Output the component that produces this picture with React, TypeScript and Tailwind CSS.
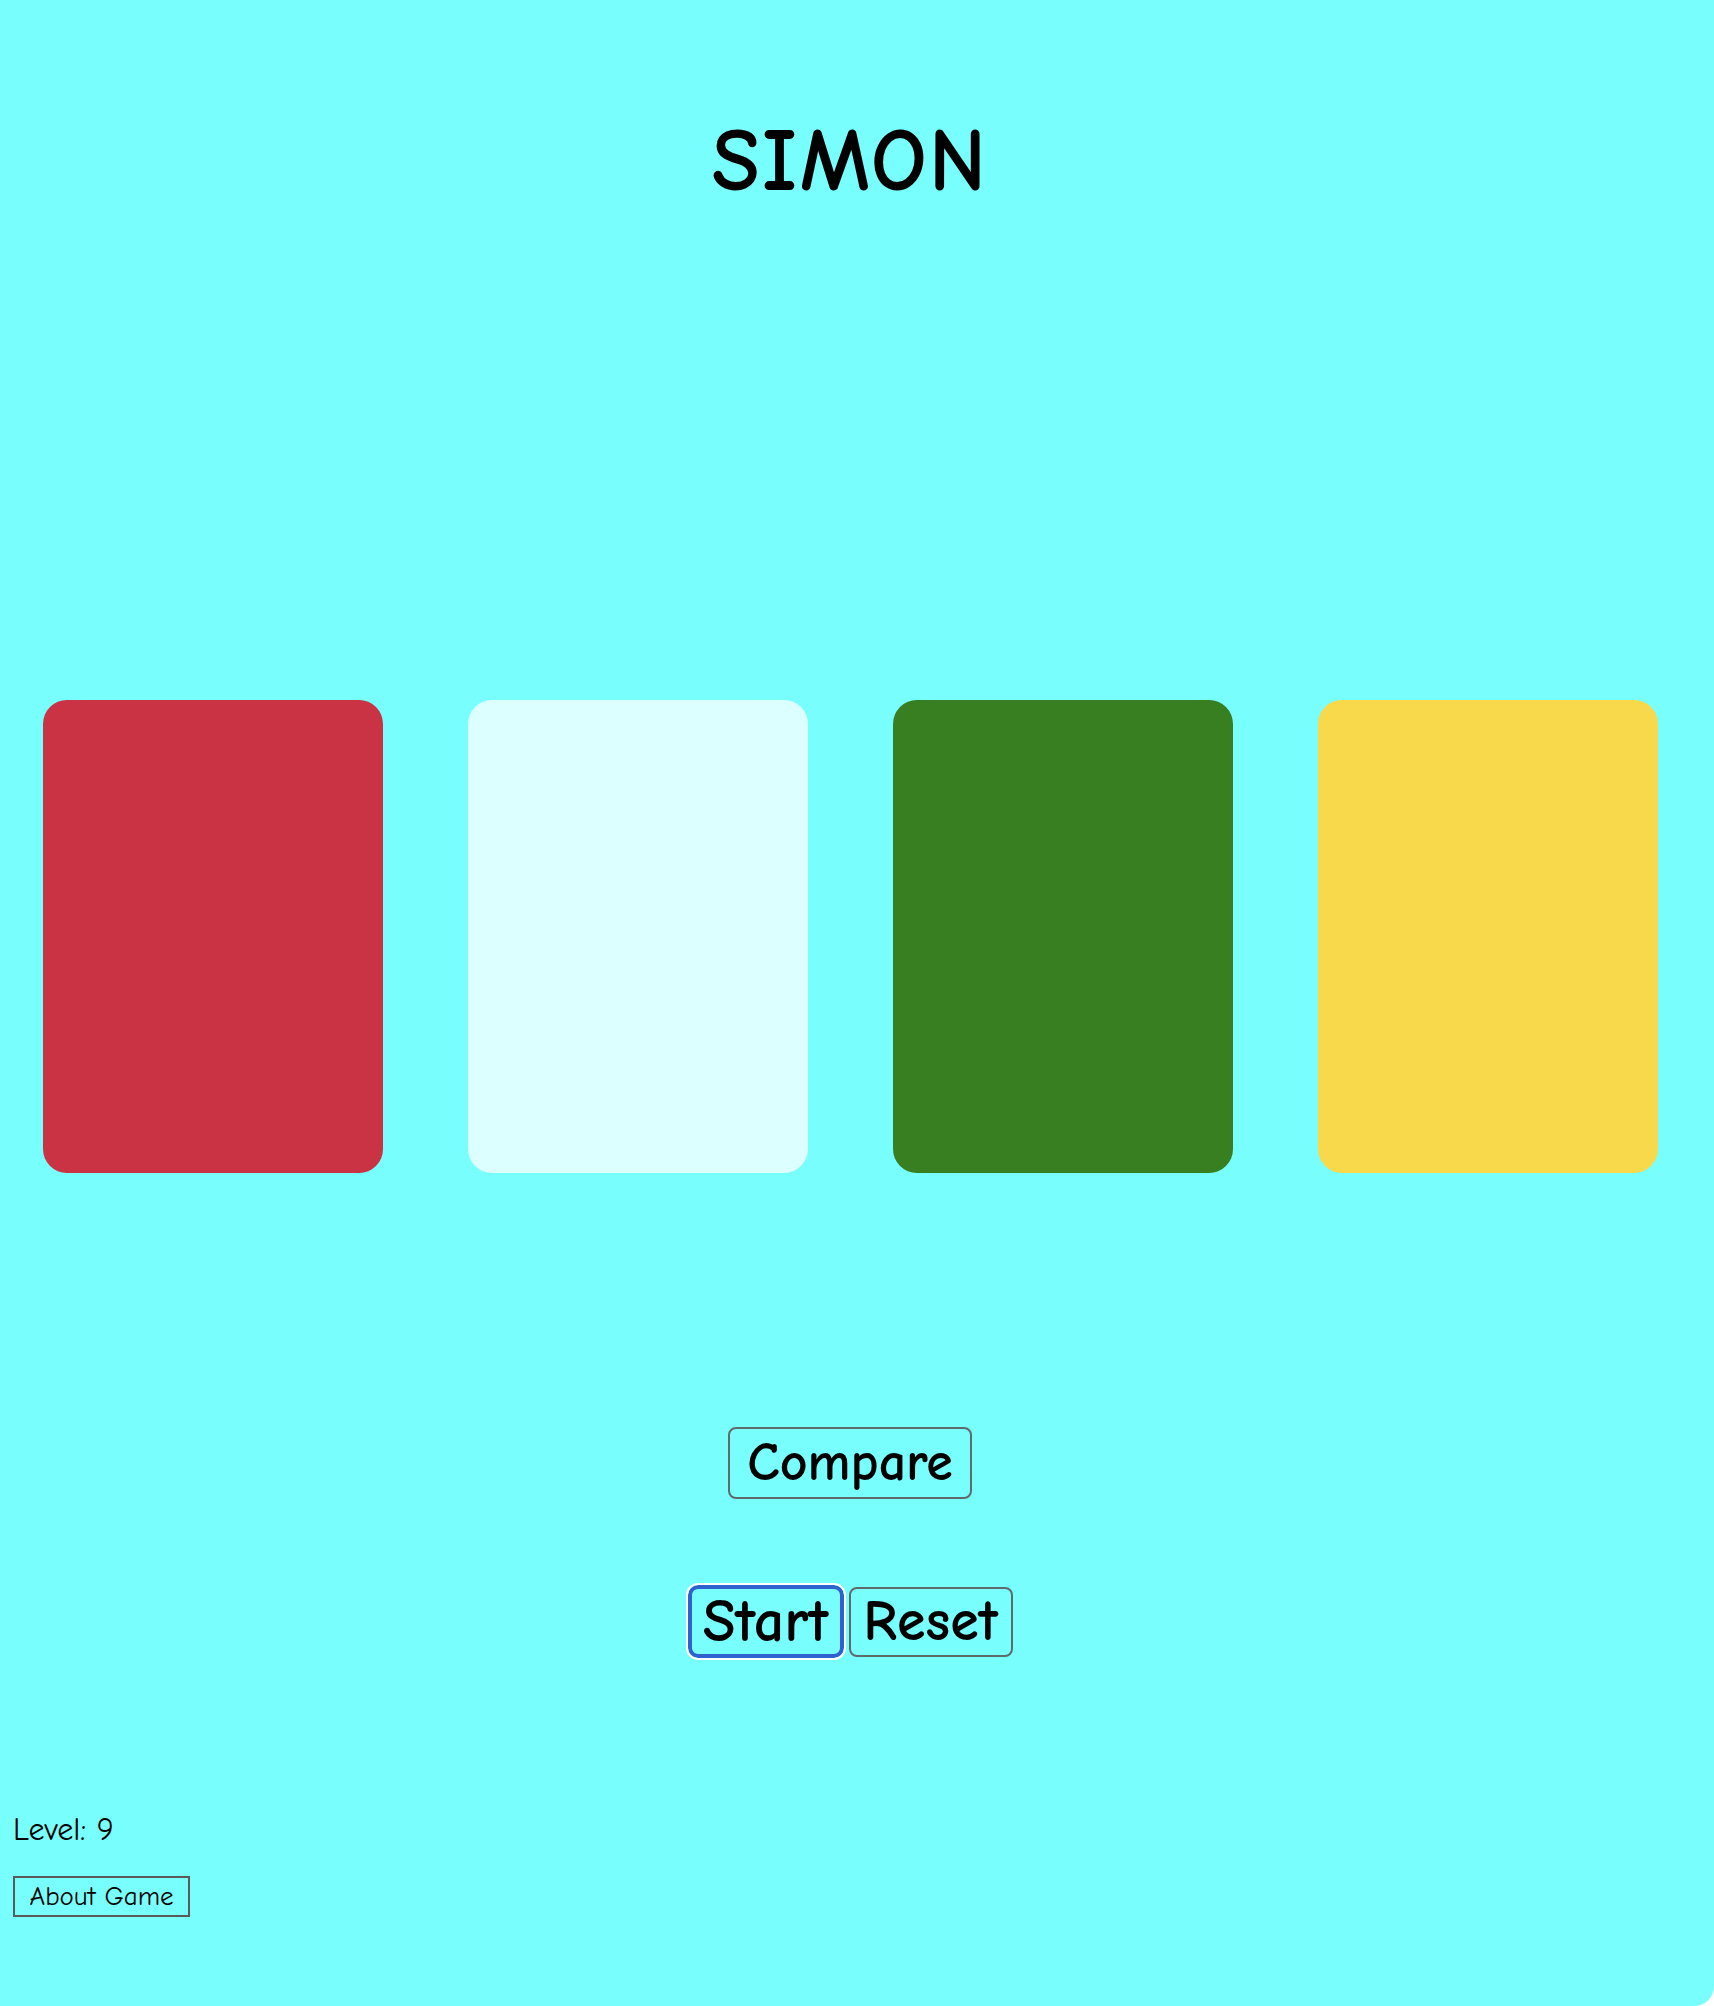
import React from "react";

const font = { fontFamily: '"Comic Sans MS", "Comic Neue", "DejaVu Sans", sans-serif' };

export default function App() {
  return (
    <div
      className="min-h-[2006px] w-full bg-[#79fefe] text-black rounded-br-[20px]"
      style={font}
    >
      <div className="w-[1700px] flex flex-col">
        <h1 className="text-center font-bold text-[88px] leading-none mt-[122px] tracking-[2px] h-[80px] flex items-center justify-center">
          SIMON
        </h1>

        <div className="flex justify-around mt-[498px]">
          <div className="w-[340px] h-[473px] rounded-[24px] bg-[#c93343]" />
          <div className="w-[340px] h-[473px] rounded-[24px] bg-[#dcffff]" />
          <div className="w-[340px] h-[473px] rounded-[24px] bg-[#387f22]" />
          <div className="w-[340px] h-[473px] rounded-[24px] bg-[#f9d94c]" />
        </div>

        <div className="flex justify-center mt-[254px]">
          <button className="w-[244px] h-[72px] rounded-[8px] border-2 border-[#5f6a6a] bg-[#79fefe] text-[54px] font-bold leading-none flex items-center justify-center">
            Compare
          </button>
        </div>

        <div className="flex justify-center gap-[5px] mt-[86px]">
          <button className="w-[156px] h-[73px] rounded-[10px] border-[4px] border-[#2f62d0] outline outline-2 outline-white bg-[#79fefe] text-[60px] font-bold leading-none flex items-center justify-center">
            Start
          </button>
          <button className="w-[164px] h-[70px] mt-[2px] rounded-[8px] border-2 border-[#5f6a6a] bg-[#79fefe] text-[58px] font-bold leading-none flex items-center justify-center">
            Reset
          </button>
        </div>

        <div className="ml-[13px] mt-[156px] text-[32px] leading-none">Level: 9</div>

        <div className="ml-[13px] mt-[30px]">
          <button className="w-[177px] h-[41px] border-2 border-[#5a5a5a] bg-[#79fefe] text-[27px] leading-none flex items-center justify-center">
            About Game
          </button>
        </div>
      </div>
    </div>
  );
}
